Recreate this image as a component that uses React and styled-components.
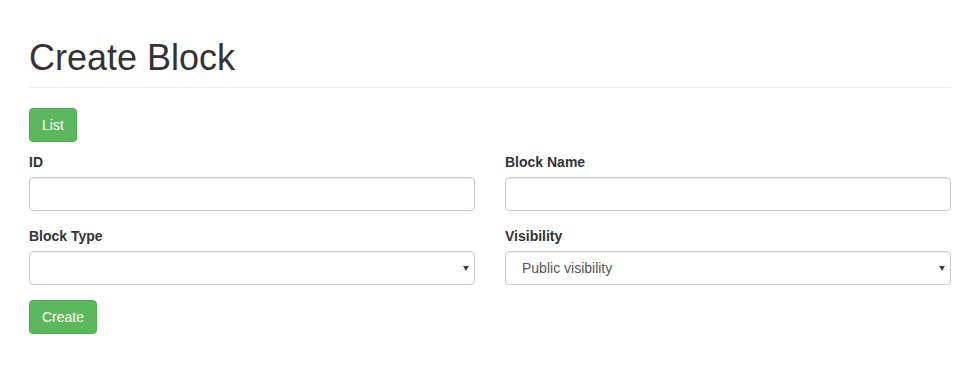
import React from 'react';
import styled, {createGlobalStyle} from 'styled-components';

const Global = createGlobalStyle`
    * { box-sizing: border-box; }
    body {
        margin: 0;
        background: #fff;
        color: #333;
        font-family: "Liberation Sans", Arial, sans-serif;
        font-size: 14px;
        line-height: 1.42857;
    }
`;

const Page = styled.div`
    padding: 0 29px;
`;

const Header = styled.div`
    margin: 38px 0 20px;
    padding-bottom: 9px;
    border-bottom: 1px solid #eee;
`;

const Title = styled.h1`
    margin: 0;
    font-size: 36px;
    font-weight: 500;
    line-height: 1.1;
    color: #333;
`;

const Button = styled.button`
    display: inline-block;
    height: 34px;
    padding: 6px 12px;
    font-family: inherit;
    font-size: 14px;
    line-height: 20px;
    color: #fff;
    background: #5cb85c;
    border: 1px solid #4cae4c;
    border-radius: 4px;
    cursor: pointer;
`;

const Form = styled.form`
    margin-top: 10px;
`;

const Row = styled.div`
    display: grid;
    grid-template-columns: 1fr 1fr;
    column-gap: 30px;
`;

const Group = styled.div`
    margin-bottom: 15px;
`;

const Label = styled.label`
    display: block;
    margin-bottom: 5px;
    font-weight: bold;
    line-height: 20px;
`;

const Input = styled.input`
    display: block;
    width: 100%;
    height: 34px;
    padding: 6px 12px;
    font-family: inherit;
    font-size: 14px;
    color: #555;
    background: #fff;
    border: 1px solid #ccc;
    border-radius: 4px;
    box-shadow: inset 0 1px 1px rgba(0,0,0,.075);
    outline: none;
`;

const SelectWrap = styled.div`
    position: relative;
`;

const Select = styled.select`
    display: block;
    width: 100%;
    height: 34px;
    padding: 6px 24px 6px 16px;
    font-family: inherit;
    font-size: 14px;
    color: #555;
    background: #fff;
    border: 1px solid #ccc;
    border-radius: 4px;
    box-shadow: inset 0 1px 1px rgba(0,0,0,.075);
    appearance: none;
    -webkit-appearance: none;
    outline: none;
`;

const Caret = styled.span`
    position: absolute;
    right: 6px;
    top: 15px;
    width: 0;
    height: 0;
    border-left: 3px solid transparent;
    border-right: 3px solid transparent;
    border-top: 5px solid #444;
    pointer-events: none;
`;

const Field = ({label, children}) => (
    <Group>
        <Label>{label}</Label>
        {children}
    </Group>
);

export default () => {
    return (
        <Page>
            <Global/>
            <Header>
                <Title>Create Block</Title>
            </Header>
            <Button type="button">List</Button>
            <Form onSubmit={e => e.preventDefault()}>
                <Row>
                    <Field label="ID"><Input type="text"/></Field>
                    <Field label="Block Name"><Input type="text"/></Field>
                    <Field label="Block Type">
                        <SelectWrap>
                            <Select defaultValue=""><option value=""></option></Select>
                            <Caret/>
                        </SelectWrap>
                    </Field>
                    <Field label="Visibility">
                        <SelectWrap>
                            <Select defaultValue="public">
                                <option value="public">Public visibility</option>
                                <option value="private">Private visibility</option>
                            </Select>
                            <Caret/>
                        </SelectWrap>
                    </Field>
                </Row>
                <Button type="submit">Create</Button>
            </Form>
        </Page>
    );
}
